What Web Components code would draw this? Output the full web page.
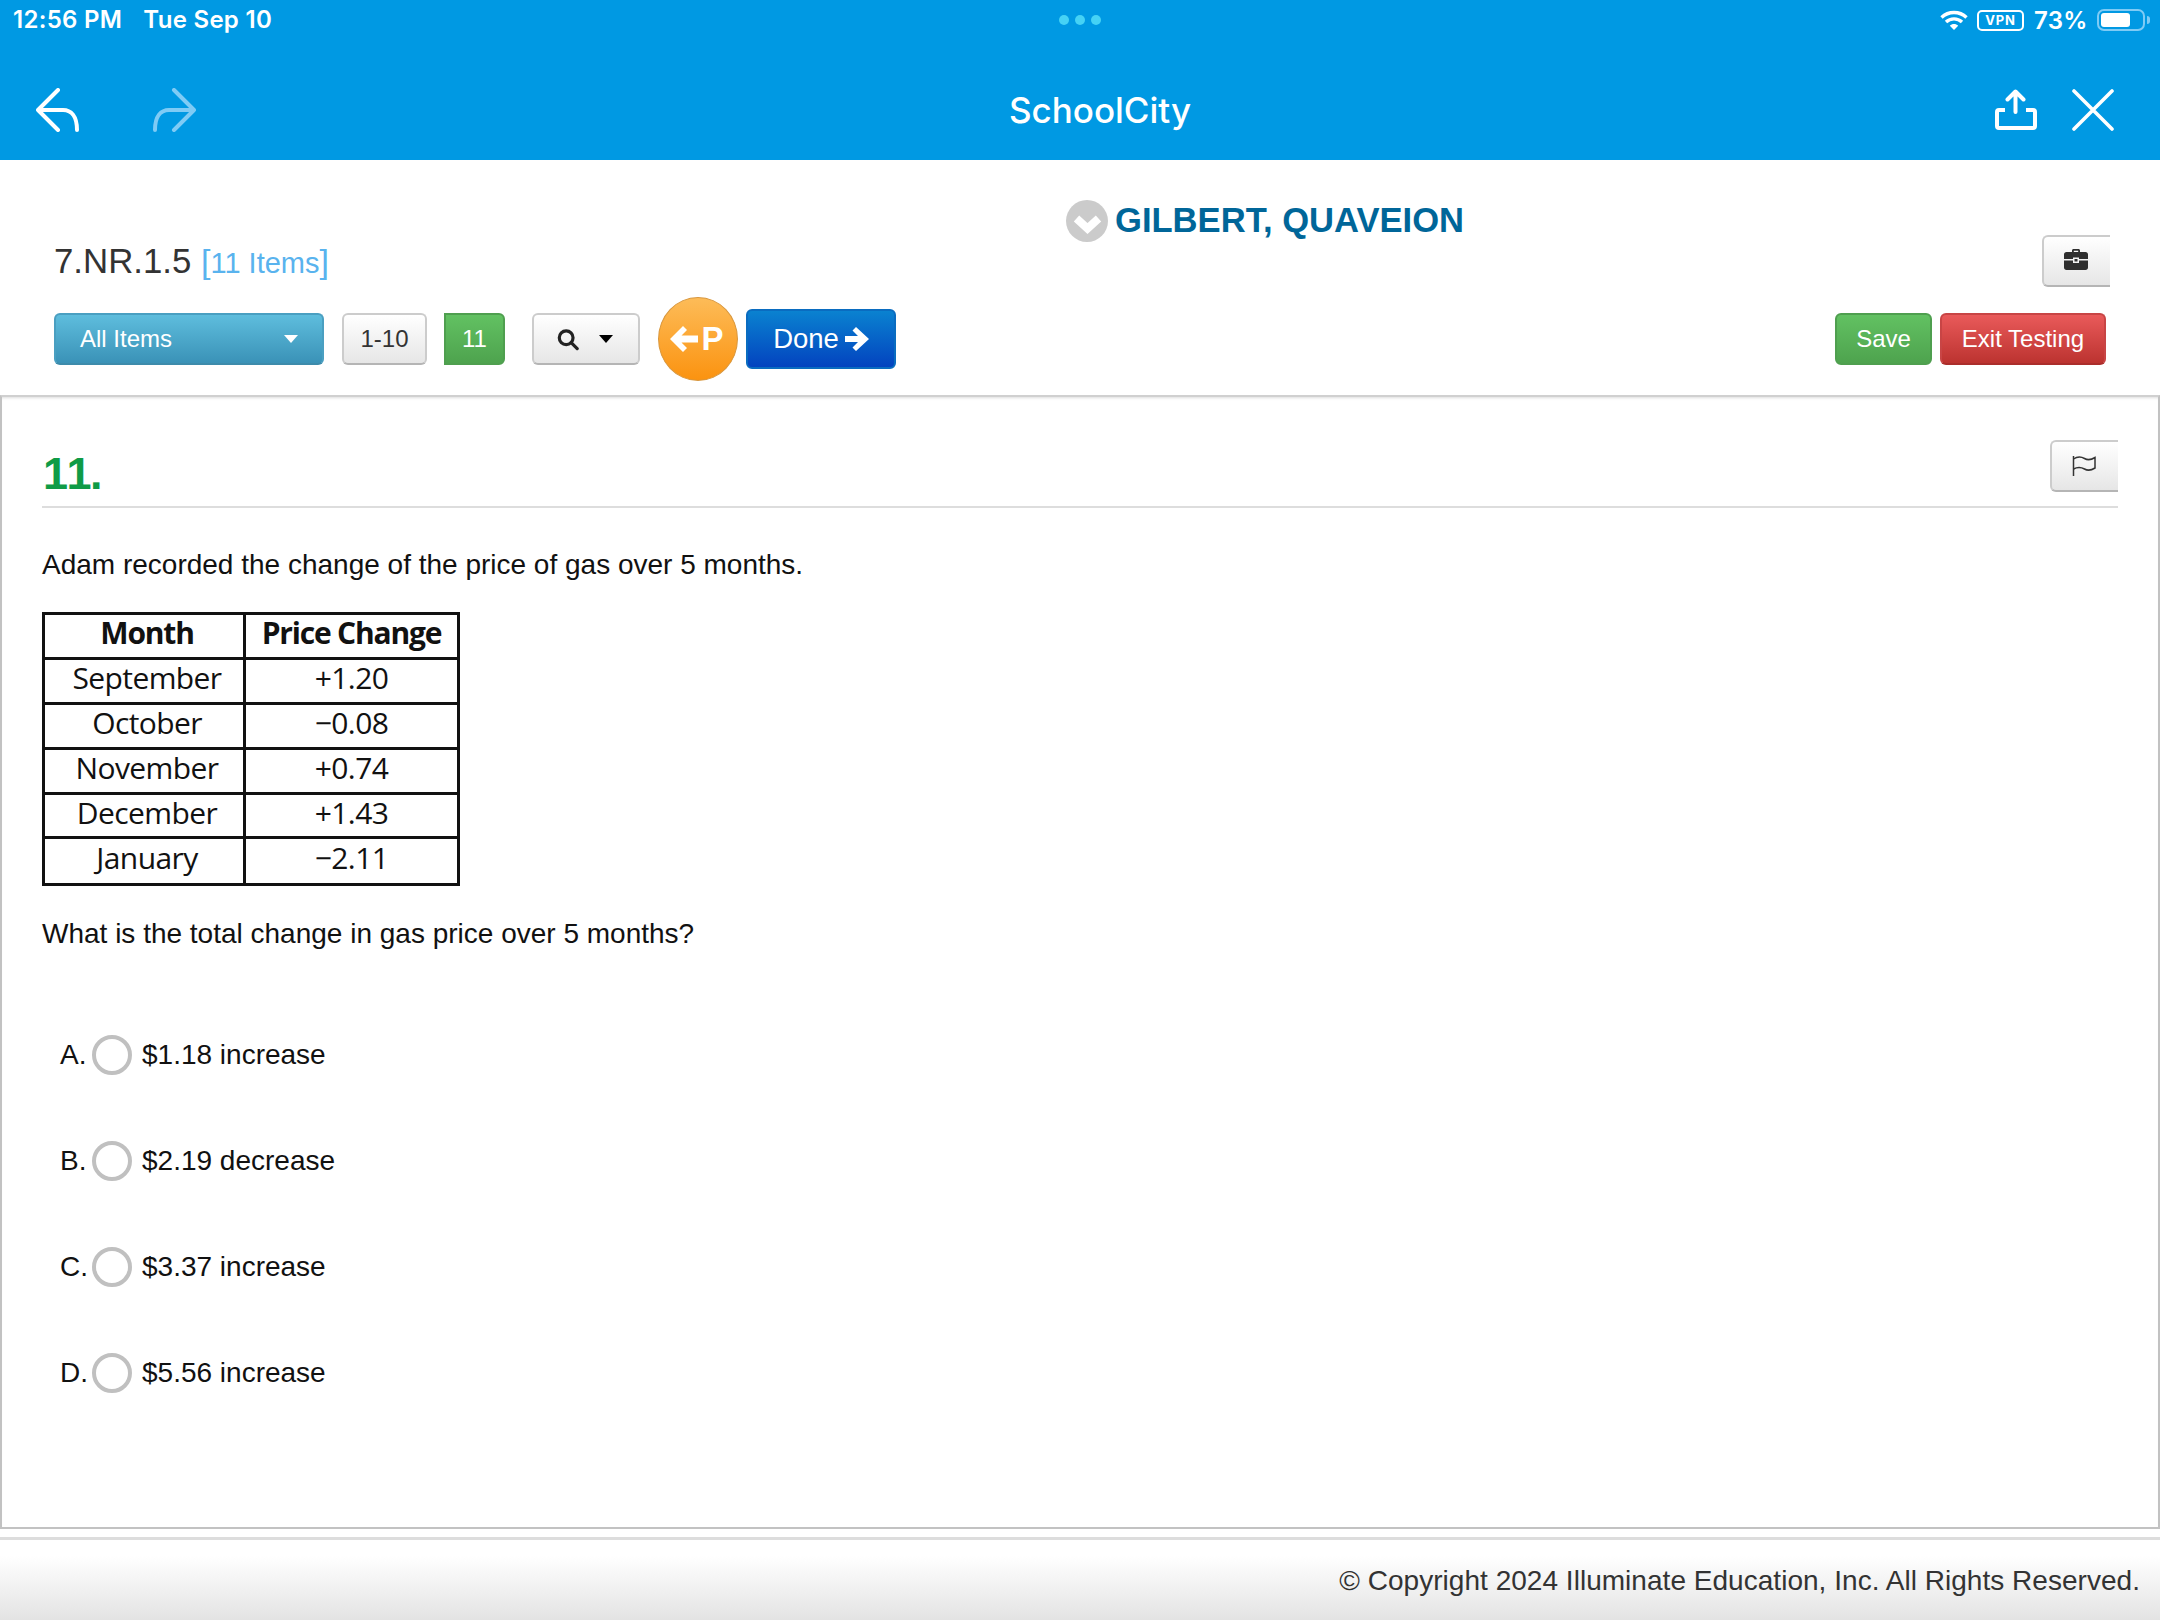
<!DOCTYPE html>
<html lang="en">
<head>
<meta charset="utf-8">
<title>SchoolCity</title>
<style>
   html, body { margin: 0; padding: 0; background: #fff; }
   body { width: 2160px; height: 1620px; overflow: hidden; font-family: "Liberation Sans", Arial, sans-serif; color: #000; }
   test-page { display: block; }
</style>
</head>
<body>
<test-page></test-page>
<script>
const 
   define = ( name, html, setup ) => {
      const tpl = document.createElement( "template" );
      tpl.innerHTML = html;
      customElements.define( name, class extends HTMLElement {
         constructor() {
            super();
            this.attachShadow( { mode: "open" } ).append( tpl.content.cloneNode( true ) );
         }
         connectedCallback() {
            if( setup ) setup( this, this.shadowRoot );
         }
      } );
   }
;

/* == [ ipad status bar ] == */
define( "status-bar", `
   <style>
      :host { display: grid; grid-template-columns: 1fr auto 1fr; align-items: center; height: 40px; padding: 0 10px 0 13px; color: #fff; font: 600 24px Inter, sans-serif; }
      .l { display: flex; gap: 21px; letter-spacing: .3px; margin-top: -2px; }
      .dots { display: flex; gap: 6px; margin-right: 3px; }
      .dots i { width: 10px; height: 10px; border-radius: 50%; background: #45d2f5; }
      .r { display: flex; justify-content: flex-end; align-items: center; }
      .vpn { box-sizing: border-box; width: 47px; height: 21px; margin: 0 10px 0 9px; border: 2px solid #fff; border-radius: 5px; font: 700 13px/17px Inter, sans-serif; letter-spacing: .8px; text-align: center; }
      .pct { font-size: 24px; width: 63px; letter-spacing: .3px; }
      .bat { box-sizing: border-box; width: 48px; height: 22px; padding: 2px; border: 2px solid #7fcbf5; border-radius: 7px; }
      .bat i { display: block; width: 29px; height: 14px; background: #fff; border-radius: 3px; }
      .nub { width: 3px; height: 8px; margin-left: 2px; background: #7fcbf5; border-radius: 0 3px 3px 0; }
   </style>
   <div class="l"><span>12:56 PM</span><span>Tue Sep 10</span></div>
   <div class="dots"><i></i><i></i><i></i></div>
   <div class="r">
      <svg width="28" height="20" viewBox="0 0 28 20" fill="none" stroke="#fff" stroke-width="3.4">
         <path d="M1.5 7.5C8.5 .8 19.500 .8 26.500 7.500"/>
         <path d="M6 12C10.500 7.800 17.500 7.800 22 12"/>
         <path d="M14 20L9.800 15.700C12 13.500 16 13.500 18.200 15.700Z" fill="#fff" stroke="none"/>
      </svg>
      <span class="vpn">VPN</span>
      <span class="pct">73%</span>
      <span class="bat"><i></i></span>
      <span class="nub"></span>
   </div>
` );

/* == [ app bar ] == */
define( "app-bar", `
   <style>
      :host { display: grid; grid-template-columns: 1fr auto 1fr; align-items: center; box-sizing: border-box; height: 120px; padding: 20px 46px 0 36px; color: #fff; }
      .l { display: flex; gap: 72px; align-items: center; }
      .r { display: flex; gap: 35px; justify-content: flex-end; align-items: center; }
      h1 { margin: 0 0 0 50px; font: 500 35px Inter, sans-serif; }
      svg { display: block; fill: none; stroke: #fff; stroke-linecap: round; stroke-linejoin: round; }
   </style>
   <div class="l">
      <svg width="44" height="44" viewBox="0 0 44 44" stroke-width="4">
         <path d="M22 2L2 22L22 42M2 22H27C35 22 41 28 41 42"/>
      </svg>
      <svg width="44" height="44" viewBox="0 0 44 44" stroke-width="4" style="stroke:#7fcbf5">
         <path d="M22 2L42 22L22 42M42 22H17C9 22 3 28 3 42"/>
      </svg>
   </div>
   <h1>SchoolCity</h1>
   <div class="r">
      <svg width="42" height="42" viewBox="0 0 42 42" stroke-width="4">
         <path d="M20.500 3V23M12.500 10.500L20.500 2.500L28.500 10.500"/>
         <path d="M10 21H4Q2 21 2 23V37Q2 39 4 39H38Q40 39 40 37V23Q40 21 38 21H31" stroke-linecap="butt"/>
      </svg>
      <svg width="42" height="42" viewBox="0 0 42 42" stroke-width="3.600" stroke-linecap="butt">
         <path d="M2 2L40 40M40 2L2 40"/>
      </svg>
   </div>
` );

/* == [ bootstrap 2 style button ] == */
define( "sc-btn", `
   <style>
      :host { display: inline-flex; box-sizing: border-box; align-items: center; justify-content: center; height: 52px; border: 2px solid #ccc; border-bottom-color: #b5b5b5; border-radius: 6px; background: linear-gradient( #fff, #e6e6e6 ); color: #333; font: 24px "Liberation Sans", Arial, sans-serif; }
      :host( [kind=info] ) { background: linear-gradient( #5ebddd, #3a92b7 ); border-color: #4a9fc1; border-bottom-color: #3d8bab; color: #fff; }
      :host( [kind=ok] ) { background: linear-gradient( #62c162, #4ea34e ); border-color: #4f9f4f; color: #fff; }
      :host( [kind=bad] ) { background: linear-gradient( #e95a5a, #bc3330 ); border-color: #c84545; border-bottom-color: #ab2e2c; color: #fff; }
      :host( [kind=go] ) { background: linear-gradient( #0a82d0, #0343bf ); border-color: #0a6cc0; color: #fff; font-size: 27.500px; height: 60px; }
      :host( [flat=left] ) { border-top-left-radius: 0; border-bottom-left-radius: 0; }
      :host( [flat=right] ) { border-top-right-radius: 0; border-bottom-right-radius: 0; border-right-width: 0; }
   </style>
   <slot></slot>
` );

/* == [ top of the test: title, student, toolbar ] == */
define( "test-header", `
   <style>
      :host { display: block; height: 235px; }
      .top { display: grid; grid-template-columns: 1012px auto 1fr; height: 137px; padding: 0 50px 0 54px; }
      .title { margin-top: 81px; font: 34.800px/40px "Liberation Sans", Arial, sans-serif; color: #333; white-space: nowrap; }
      .title span { color: #59b3ee; font-size: 29px; }
      .title span em { font-style: normal; font-size: 34px; font-weight: 400; }
      .name { display: flex; align-items: center; gap: 7px; height: 42px; margin-top: 40px; font: 700 34.600px "Liberation Sans", Arial, sans-serif; color: #006699; white-space: nowrap; }
      .name span { margin-top: -2px; }
      .check { display: block; }
      .brief { justify-self: end; margin-top: 75px; padding: 0 2px 3px 0; }
      .tools { display: flex; align-items: center; height: 84px; padding: 0 54px; }
      .all { width: 270px; justify-content: space-between; padding: 0 24px 0 24px; }
      .tri { display: inline-block; border: 7px solid transparent; border-top: 8px solid #fff; border-bottom: 0; }
      .tri.d { border-top-color: #000; }
      .back { box-sizing: border-box; display: flex; align-items: center; justify-content: center; gap: 3px; width: 80px; height: 84px; margin: 0 8px 0 18px; padding-right: 2px; border: 1px solid #d8963c; border-radius: 50%; background: linear-gradient( #fdbc58, #fb9310 ); color: #fff; font: 700 33px "Liberation Sans", Arial, sans-serif; }
      .done { gap: 6px; }
      .right { display: flex; gap: 8px; margin-left: auto; }
   </style>
   <div class="top">
      <div class="title">7.NR.1.5 <span><em>[</em>11 Items<em>]</em></span></div>
      <div class="name">
         <svg class="check" width="42" height="42" viewBox="0 0 42 42">
            <circle cx="21" cy="21" r="21" fill="#cbcbcb"/>
            <path d="M10.500 18.500L21.500 28.500L32.500 18.500" fill="none" stroke="#fff" stroke-width="8"/>
         </svg>
         <span>GILBERT, QUAVEION</span>
      </div>
      <sc-btn class="brief" flat="right" style="width:68px">
         <svg width="24" height="21" viewBox="0 0 24 21">
            <path fill="#2f2f2f" d="M8 3V1.500C8 .7 8.700 0 9.500 0h5C15.300 0 16 .7 16 1.500V3h5.500C23 3 24 4 24 5.500V10H15V8.500H9V10H0V5.500C0 4 1 3 2.500 3ZM9.800 3h4.400V1.700H9.800ZM0 11.500H9V14h6V11.500H24V18.500C24 20 23 21 21.500 21H2.500C1 21 0 20 0 18.500ZM10.500 10h3v2.500h-3Z"/>
         </svg>
      </sc-btn>
   </div>
   <div class="tools">
      <sc-btn kind="info" class="all"><span>All Items</span><i class="tri"></i></sc-btn>
      <sc-btn style="width:85px;margin-left:18px">1-10</sc-btn>
      <sc-btn kind="ok" flat="left" style="width:61px;margin-left:17px">11</sc-btn>
      <sc-btn style="width:108px;margin-left:27px;gap:20px;padding-right:2px">
         <svg width="22" height="23" viewBox="0 0 24 24" fill="none" stroke="#222" stroke-width="3.500">
            <circle cx="10" cy="10" r="7.500"/><path d="M15.500 15.500L22 22" stroke-linecap="round"/>
         </svg>
         <i class="tri d"></i>
      </sc-btn>
      <div class="back">
         <svg width="28" height="26" viewBox="0 0 28 26" fill="#fff"><path d="M13 0L17 4L11.500 9.500H28V16.500H11.500L17 22L13 26L0 13Z"/></svg>
         <span>P</span>
      </div>
      <sc-btn kind="go" class="done" style="width:150px">
         <span>Done</span>
         <svg width="24" height="26" viewBox="0 0 24 26" fill="#fff"><path d="M11 1L24 13L11 25L7.500 21.500L13 16H0V10H13L7.500 4.500Z"/></svg>
      </sc-btn>
      <div class="right">
         <sc-btn kind="ok" style="width:97px">Save</sc-btn>
         <sc-btn kind="bad" style="width:166px">Exit Testing</sc-btn>
      </div>
   </div>
` );

/* == [ the price table, an image in the original item ] == */
define( "price-table", `
   <style>
      :host { display: block; width: 418px; }
      table { border-collapse: collapse; width: 418px; table-layout: fixed; font: 30px "Open Sans", sans-serif; letter-spacing: -.6px; color: #111; }
      td, th { height: 36.300px; padding: 0 0 5.600px; box-sizing: content-box; border: 3px solid #111; text-align: center; line-height: 36px; }
      td:first-child, th:first-child { padding-left: 6px; }
      th { font-weight: 700; letter-spacing: -1.200px; }
      col:first-child { width: 201px; }
      tr:last-child td { padding-bottom: 7.600px; }
   </style>
   <table>
      <colgroup><col><col></colgroup>
      <tr><th>Month</th><th>Price Change</th></tr>
      <tr><td>September</td><td>+1.20</td></tr>
      <tr><td>October</td><td>−0.08</td></tr>
      <tr><td>November</td><td>+0.74</td></tr>
      <tr><td>December</td><td>+1.43</td></tr>
      <tr><td>January</td><td>−2.11</td></tr>
   </table>
` );

/* == [ one answer choice ] == */
define( "answer-option", `
   <style>
      :host { display: flex; align-items: center; height: 106px; padding-left: 18px; font: 28px "Liberation Sans", Arial, sans-serif; color: #111; }
      b { font-weight: 400; width: 32px; }
      i { box-sizing: border-box; width: 40px; height: 40px; margin-right: 10px; border: 4px solid #c0c0c0; border-radius: 50%; background: #fff; }
   </style>
   <b></b><i></i><slot></slot>
`, ( el, root ) => {
   root.querySelector( "b" ).textContent = el.getAttribute( "letter" ) + ".";
} );

/* == [ the question panel ] == */
define( "question-panel", `
   <style>
      :host { display: block; box-sizing: border-box; height: 1134px; padding: 0 40px 0 40px; border: 2px solid #c2c2c2; border-top: 2px solid #d0d0d0; box-shadow: inset 0 3px 3px -2px #ddd; font: 28px "Liberation Sans", Arial, sans-serif; color: #111; }
      .head { display: flex; justify-content: space-between; align-items: flex-end; height: 111px; box-sizing: border-box; padding-bottom: 14px; border-bottom: 2px solid #ddd; }
      h2 { margin: 0 0 -8px 1px; font: 700 45px/52px "Liberation Sans", Arial, sans-serif; font-kerning: none; letter-spacing: -1.500px; color: #0f9b46; }
      p { margin: 0; line-height: 40px; }
      .q1 { margin-top: 37px; }
      price-table { margin: 27px 0 28px; }
      answer-option:first-of-type { margin-top: 48px; }
   </style>
   <div class="head">
      <h2>11.</h2>
      <sc-btn flat="right" style="width:68px;padding-right:2px">
         <svg width="24" height="22" viewBox="0 0 24 22" fill="none" stroke="#333" stroke-width="1.500">
            <path d="M1.500 1V21"/>
            <path d="M1.500 4C6 1 9 1.500 12.500 3.500C16 5.500 19 5 23 2.500V13C19 15.500 16 16 12.500 14C9 12 6 11.500 1.500 14"/>
         </svg>
      </sc-btn>
   </div>
   <p class="q1">Adam recorded the change of the price of gas over 5 months.</p>
   <price-table></price-table>
   <p>What is the total change in gas price over 5 months?</p>
   <answer-option letter="A">$1.18 increase</answer-option>
   <answer-option letter="B">$2.19 decrease</answer-option>
   <answer-option letter="C">$3.37 increase</answer-option>
   <answer-option letter="D">$5.56 increase</answer-option>
` );

/* == [ copyright footer ] == */
define( "page-footer", `
   <style>
      :host { display: flex; box-sizing: border-box; align-items: center; justify-content: flex-end; height: 83px; margin-top: 8px; padding: 1px 20px 0 0; border-top: 3px solid #ddd; background: linear-gradient( #fff 20%, #e3e3e3 ); color: #333; font: 28px "Liberation Sans", Arial, sans-serif; letter-spacing: .03px; }
   </style>
   <slot></slot>
` );

define( "test-page", `
   <style>
      :host { display: block; width: 2160px; height: 1620px; overflow: hidden; }
      .blue { background: #0099e3; }
   </style>
   <div class="blue">
      <status-bar></status-bar>
      <app-bar></app-bar>
   </div>
   <test-header></test-header>
   <question-panel></question-panel>
   <page-footer>© Copyright 2024 Illuminate Education, Inc. All Rights Reserved.</page-footer>
` );
</script>
</body>
</html>
